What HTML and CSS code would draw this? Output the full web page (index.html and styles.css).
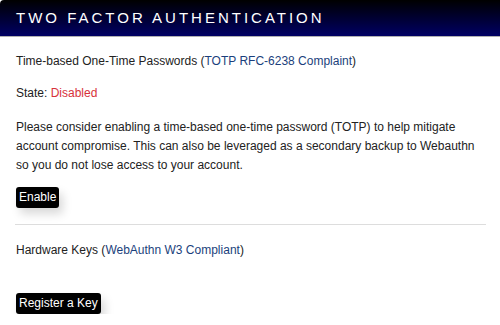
FILE: index.html
```html
<!DOCTYPE html>
<html lang="en">
<head>
    <meta charset="UTF-8">
    <title>Two Factor Authentication</title>
    <link rel="stylesheet" href="styles.css">
</head>
<body>
    <div class="header">TWO FACTOR AUTHENTICATION</div>
    <div class="content">
        <p class="row">Time-based One-Time Passwords (<a href="#">TOTP RFC-6238 Complaint</a>)</p>
        <p class="row state">State: <span class="off">Disabled</span></p>
        <p class="info">Please consider enabling a time-based one-time password (TOTP) to help mitigate account compromise. This can also be leveraged as a secondary backup to Webauthn so you do not lose access to your account.</p>
        <button class="btn">Enable</button>
        <hr class="line">
        <p class="row hw">Hardware Keys (<a href="#">WebAuthn W3 Compliant</a>)</p>
        <button class="btn btn2">Register a Key</button>
    </div>
</body>
</html>
```
FILE: styles.css
```css
body{
    margin: 0;
    font-family: 'Liberation Sans', Arial, sans-serif;
    font-size: 12px;
    color: #222;
    background: #fff;
}

.header{
    height: 36px;
    line-height: 36px;
    padding-left: 16px;
    background: linear-gradient(#000, #000064);
    border-bottom: 1px solid #b0b0b0;
    border-top-left-radius: 4px;
    color: #fff;
    font-size: 15px;
    letter-spacing: 3px;
}

.content{
    padding: 0 14px 0 16px;
}

p{
    margin: 0;
    line-height: 19px;
}

.row{
    margin-top: 15px;
}

.state{
    margin-top: 13px;
}

.info{
    margin-top: 15px;
}

a{
    color: #1b3f7c;
    text-decoration: none;
}

.off{
    color: #d7323a;
}

.btn{
    display: block;
    margin-top: 12px;
    background: #000;
    color: #fff;
    border: none;
    border-radius: 3px;
    font-family: inherit;
    font-size: 12px;
    padding: 3px 3px 4px;
    box-shadow: 4px 6px 10px rgba(0, 0, 0, 0.15);
}

.line{
    border: none;
    border-top: 1px solid #ddd;
    margin: 16px 0 0 -1px;
}

.hw{
    margin-top: 16px;
}

.btn2{
    margin-top: 33px;
}
```
